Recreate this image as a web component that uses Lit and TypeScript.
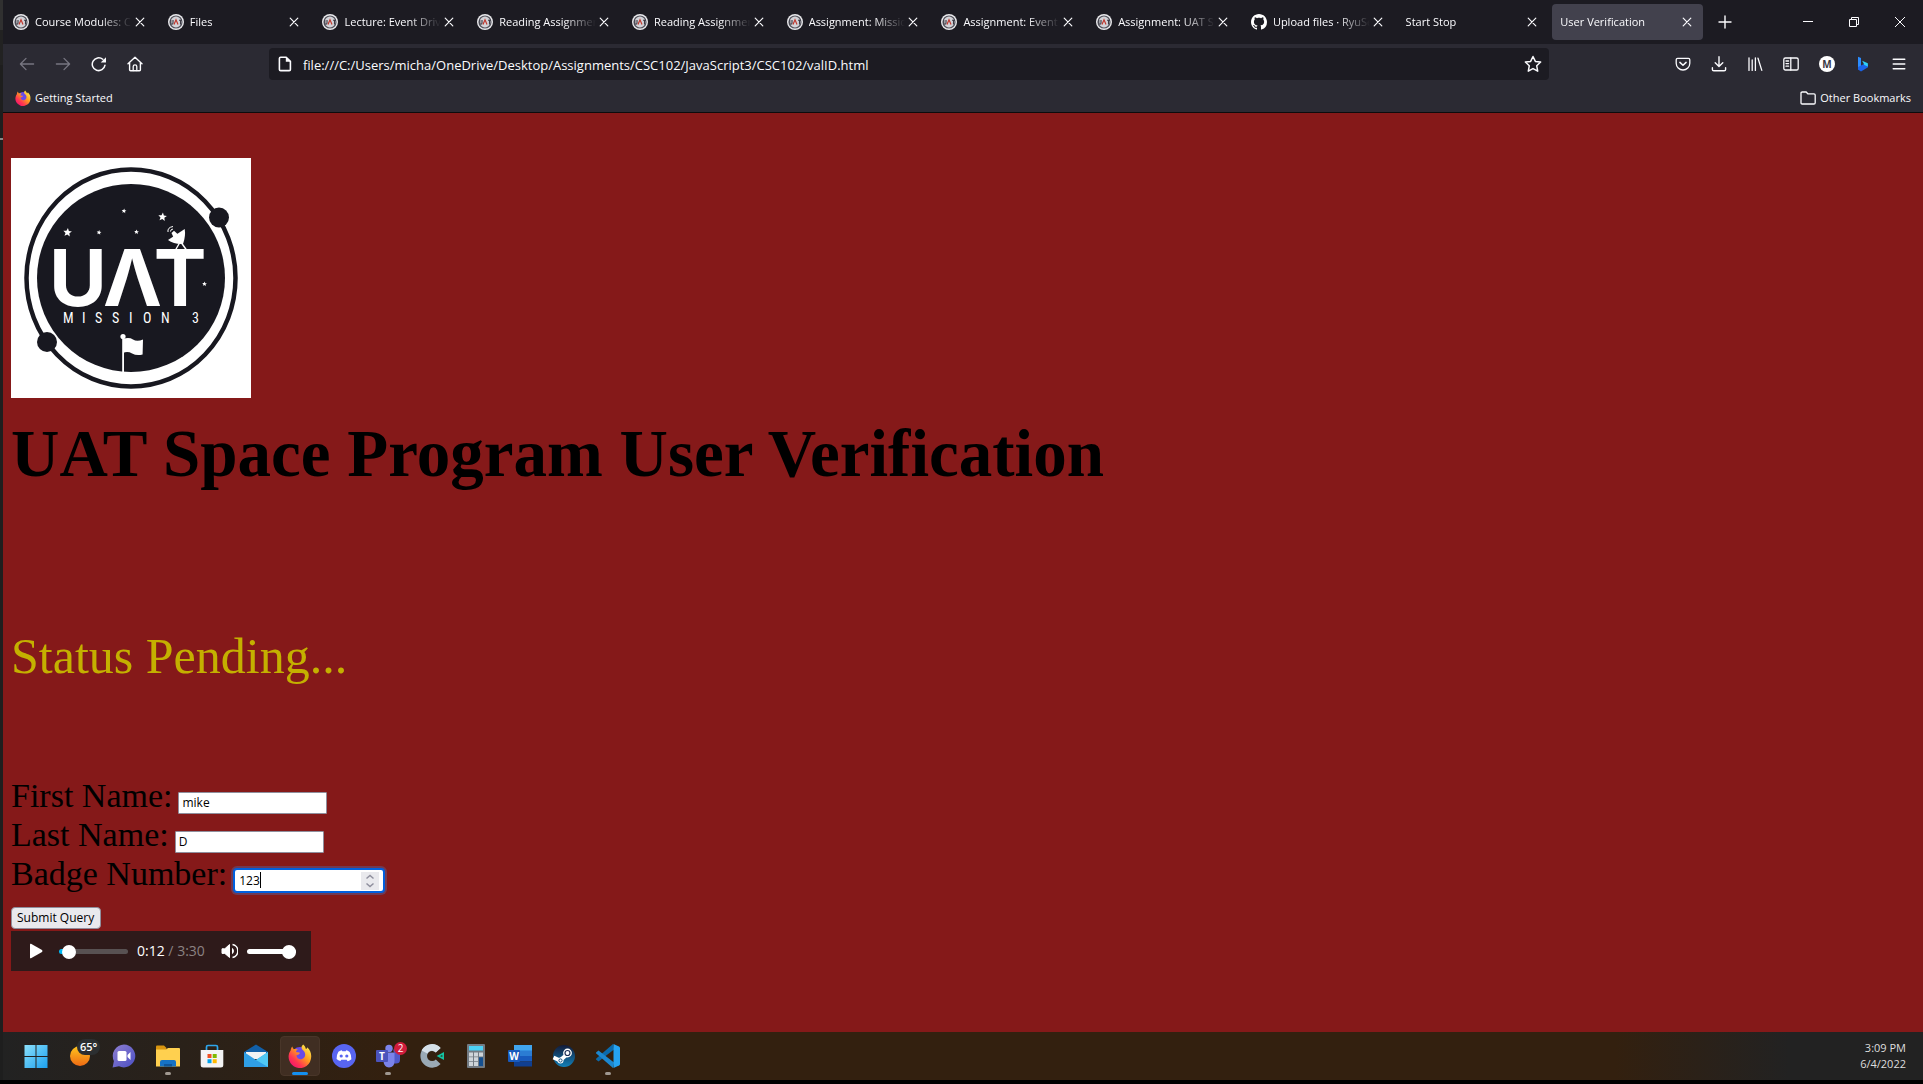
import { LitElement, html, svg, css, nothing } from "lit";
import { customElement, property, state } from "lit/decorators.js";
import { classMap } from "lit/directives/class-map.js";
import { styleMap } from "lit/directives/style-map.js";

/* ---------- shared drawings ---------- */

const line = (size: number, body: unknown) => html`
  <svg width=${size} height=${size} viewBox="0 0 16 16" fill="none" stroke="currentColor"
    stroke-width="1.3" stroke-linecap="round" stroke-linejoin="round" aria-hidden="true">${body}</svg>`;

const icons = {
  close: line(16, svg`<path d="M4.2 4.2l7.6 7.6M11.8 4.2l-7.6 7.6" stroke-width="1.2"/>`),
  plus: line(16, svg`<path d="M8 2v12M2 8h12" stroke-width="1.4"/>`),
  back: line(16, svg`<path d="M14.6 8H1.6M7 2.4L1.4 8 7 13.6"/>`),
  forward: line(16, svg`<path d="M1.4 8h13M9 2.4L14.6 8 9 13.6"/>`),
  reload: line(16, svg`<path d="M14 9.2A6.4 6.4 0 1 1 11.8 3.3" stroke-width="1.5"/><path d="M15 1.2v5.3H9.7z" fill="currentColor" stroke="none"/>`),
  home: line(16, svg`<path d="M1 7.8L8 1.2l7 6.6M2.6 6.6v7.2q0 .9.9.9h9q.9 0 .9-.9V6.6" stroke-width="1.4"/><path d="M6.2 14.5v-4q0-1.6 1.8-1.6t1.8 1.6v4"/>`),
  page: line(16, svg`<path d="M3.6 1.2h5.6l4.2 4.2v8q0 1.2-1.2 1.2H3.6q-1.2 0-1.2-1.2v-11q0-1.2 1.2-1.2z" stroke-width="1.6"/><path d="M8.8 1v4.8h4.8z" fill="currentColor" stroke="none"/>`),
  star: line(18, svg`<path d="M8 1.3l2.1 4.4 4.7.6-3.5 3.3.9 4.8L8 12.1l-4.2 2.3.9-4.8L1.2 6.3l4.7-.6z"/>`),
  pocket: line(16, svg`<path d="M2.6 2.4h10.8q1.4 0 1.4 1.4v3.4a6.8 6.8 0 0 1-13.6 0V3.8q0-1.4 1.4-1.4z"/><path d="M4.9 6.4L8 9.3l3.1-2.9" stroke-width="1.5"/>`),
  download: line(16, svg`<path d="M8 .8v9.6M4.2 6.8L8 10.6l3.8-3.8M1.4 11.8v1.6q0 1.4 1.4 1.4h10.4q1.4 0 1.4-1.4v-1.6" stroke-width="1.4"/>`),
  library: line(16, svg`<path d="M2 1.8v12.6M5.2 4v10.4M8.4 1.8v12.6M11 2.2l3.8 12.2"/>`),
  sidebar: line(16, svg`<rect x=".8" y="2" width="14.4" height="12" rx="1.6"/><path d="M7.8 2v12M3 5h2.6M3 7.6h2.6M3 10.2h2.6"/>`),
  menu: line(16, svg`<path d="M2.2 3.2h11.6M2.2 8h11.6M2.2 12.8h11.6" stroke-width="1.4"/>`),
  folder: line(16, svg`<path d="M2.2 2h4l1.6 1.8h6.2q1.2 0 1.2 1.2v7.8q0 1.2-1.2 1.2H2.2Q1 14 1 12.8V3.2Q1 2 2.2 2z"/>`),
  minimize: html`<svg width="12" height="12" viewBox="0 0 12 12" aria-hidden="true"><path d="M1 5.5h10" stroke="currentColor"/></svg>`,
  restore: html`<svg width="12" height="12" viewBox="0 0 12 12" fill="none" stroke="currentColor" aria-hidden="true"><path d="M1.5 3.5h7v7h-7zM3.5 3.5v-2h7v7h-2"/></svg>`,
  shut: html`<svg width="12" height="12" viewBox="0 0 12 12" fill="none" stroke="currentColor" aria-hidden="true"><path d="M1 1l10 10M11 1L1 11"/></svg>`,
  account: html`<svg width="16" height="16" viewBox="0 0 16 16" aria-hidden="true"><circle cx="8" cy="8" r="8" fill="#fff"/><text x="8" y="11.6" text-anchor="middle" font-family="Open Sans, sans-serif" font-size="10" font-weight="700" fill="#3a3944">M</text></svg>`,
  bing: html`<svg width="16" height="16" viewBox="0 0 16 16" aria-hidden="true"><path d="M3 .8l3 1.1v9.3l-3 2.6z" fill="#2a8cff"/><path d="M3 13.6V11l7-3.6 3 1.2v2.6L6 15.4z" fill="#1b63e8"/><path d="M7.2 4.8l5.6 2.4v3.4l-3.4-1.7z" fill="#2fd0f5"/></svg>`,
};

const firefox = (size: number) => html`
  <svg width=${size} height=${size} viewBox="0 0 24 24" aria-hidden="true">
    <defs>
      <linearGradient id="fx" x1=".85" y1=".1" x2=".15" y2=".9"><stop offset="0" stop-color="#ffe64a"/><stop offset=".4" stop-color="#ff9a1f"/><stop offset=".75" stop-color="#ff3750"/><stop offset="1" stop-color="#f5156c"/></linearGradient>
    </defs>
    <circle cx="12" cy="11.5" r="8.5" fill="#6a4be8"/>
    <path d="M15.2.6c1.500 1.300 2.300 2.800 2.700 4.300 1-.2 1.300-1 1.300-1.700 3.100 2.900 4.200 6.300 4 9.600A11.300 11.300 0 1 1 2.700 6.200c.1-1.400.7-2.800 1.600-3.800.2 1.200.8 2.100 1.600 2.800 1.400-.4 2.800-.3 4 .3-1.300.7-1.900 1.500-1.900 2.300 1.200.9 2.600.4 3.900 1-.4 1.500-1.800 2.200-3.500 2.400.2 3 2.700 4.600 5.100 4 3-.7 4.300-3.300 3.400-6.200-.5-1.600-1.600-2.500-2.600-3.400-1.300-1.500-.9-3.700.9-5z" fill="url(#fx)"/>
  </svg>`;

const uatBadge = html`
  <svg width="16" height="16" viewBox="0 0 16 16" aria-hidden="true">
    <circle cx="8" cy="8" r="8" fill="#e9e9ec"/><circle cx="8" cy="8" r="6" fill="#d3d3d8" stroke="#55555e" stroke-width="1.200"/>
    <path d="M2.800 6v3q0 1.200 1.100 1.200T5 9V6M11 6.200h3M12.500 6.200v4.200" fill="none" stroke="#3a3a44" stroke-width="1.100"/>
    <path d="M6 10.400L8 5.800l2 4.600" fill="none" stroke="#c0392f" stroke-width="1.200"/>
  </svg>`;

const github = html`
  <svg width="16" height="16" viewBox="0 0 16 16" fill="#fff" aria-hidden="true">
    <path d="M8 0C3.580 0 0 3.580 0 8c0 3.540 2.290 6.530 5.470 7.590.4.070.55-.17.55-.38 0-.19-.01-.82-.01-1.490-2.010.37-2.530-.49-2.690-.94-.09-.23-.48-.94-.82-1.130-.28-.15-.68-.52-.01-.53.63-.01 1.080.58 1.230.82.72 1.210 1.870.87 2.330.66.07-.52.28-.87.51-1.070-1.780-.2-3.640-.89-3.640-3.950 0-.87.31-1.590.82-2.150-.08-.2-.36-1.020.08-2.120 0 0 .67-.21 2.200.82.64-.18 1.320-.27 2-.27s1.360.09 2 .27c1.530-1.040 2.200-.82 2.200-.82.44 1.100.16 1.920.08 2.120.51.56.82 1.270.82 2.150 0 3.070-1.870 3.750-3.650 3.950.29.25.54.73.54 1.480 0 1.070-.01 1.930-.01 2.200 0 .21.15.46.55.38A8.010 8.010 0 0 0 16 8c0-4.420-3.580-8-8-8z"/>
  </svg>`;

/* ---------- browser chrome ---------- */

interface Tab { title: string; icon?: "uat" | "github"; active?: boolean }

const TABS: Tab[] = [
  { title: "Course Modules: CSC102", icon: "uat" },
  { title: "Files", icon: "uat" },
  { title: "Lecture: Event Driven", icon: "uat" },
  { title: "Reading Assignment", icon: "uat" },
  { title: "Reading Assignment", icon: "uat" },
  { title: "Assignment: Mission", icon: "uat" },
  { title: "Assignment: Event Dr", icon: "uat" },
  { title: "Assignment: UAT Space", icon: "uat" },
  { title: "Upload files · RyuSei", icon: "github" },
  { title: "Start Stop" },
  { title: "User Verification", active: true },
];

@customElement("browser-chrome")
export class BrowserChrome extends LitElement {
  @state() private url = "file:///C:/Users/micha/OneDrive/Desktop/Assignments/CSC102/JavaScript3/CSC102/valID.html";

  static styles = css`
    :host { display: block; background: #2b2a33; color: #fbfbfe; border-bottom: 1px solid #0c0c0d;
      font: 11px/16px "Open Sans", "Noto Sans", sans-serif; }
    button { all: unset; display: flex; align-items: center; justify-content: center; box-sizing: border-box; }
    svg { display: block; flex: none; }
    .strip { display: flex; align-items: center; height: 44px; background: #1c1b22; }
    .tabs { display: flex; flex: 1; min-width: 0; }
    .cell { flex: 1 1 0; min-width: 0; padding: 0 2px; }
    .tab { display: flex; align-items: center; gap: 6px; height: 36px; padding: 0 8px; border-radius: 4px; }
    .tab.active { background: #42414d; }
    .title { flex: 1; min-width: 0; overflow: hidden; white-space: nowrap;
      mask-image: linear-gradient(to right, #000 calc(100% - 32px), transparent); }
    .tab .close { margin-left: -6px; }
    .new { width: 40px; height: 36px; }
    .drag { width: 40px; }
    .win { width: 46px; height: 44px; }
    .nav { display: flex; align-items: center; height: 40px; padding: 0 6px; }
    .tool { width: 36px; height: 32px; }
    .tool.off { color: #777681; }
    .space { flex: 11 1 0; }
    .url { flex: 120 1 0; display: flex; align-items: center; gap: 10px; height: 32px; padding: 0 7px 0 8px;
      box-sizing: border-box; border-radius: 4px; background: #1c1b22; }
    .url input { flex: 1; min-width: 0; padding: 2px 0 0; border: 0; outline: 0; background: none; color: inherit;
      font: 13px/20px "Open Sans", "Noto Sans", sans-serif; }
    .marks { display: flex; justify-content: space-between; align-items: center; height: 28px; padding: 0 12px;
      box-sizing: border-box; }
    .marks a { display: flex; align-items: center; gap: 4px; color: inherit; text-decoration: none; }
  `;

  private tool(label: string, icon: unknown, off = false) {
    return html`<button class=${classMap({ tool: true, off })} aria-label=${label}>${icon}</button>`;
  }

  render() {
    return html`
      <div class="strip">
        <div class="tabs">
          ${TABS.map((t) => html`
            <div class="cell">
              <div class=${classMap({ tab: true, active: !!t.active })}>
                ${t.icon === "uat" ? uatBadge : t.icon === "github" ? github : nothing}
                <span class="title">${t.title}</span>
                <button class="close" aria-label="Close tab">${icons.close}</button>
              </div>
            </div>`)}
        </div>
        <button class="new" aria-label="New tab">${icons.plus}</button>
        <div class="drag"></div>
        <button class="win" aria-label="Minimize">${icons.minimize}</button>
        <button class="win" aria-label="Restore">${icons.restore}</button>
        <button class="win" aria-label="Close">${icons.shut}</button>
      </div>
      <div class="nav">
        ${this.tool("Back", icons.back, true)}
        ${this.tool("Forward", icons.forward, true)}
        ${this.tool("Reload", icons.reload)}
        ${this.tool("Home", icons.home)}
        <div class="space"></div>
        <div class="url">
          ${icons.page}
          <input aria-label="Address" .value=${this.url} spellcheck="false">
          <button aria-label="Bookmark this page">${icons.star}</button>
        </div>
        <div class="space"></div>
        ${this.tool("Pocket", icons.pocket)}
        ${this.tool("Downloads", icons.download)}
        ${this.tool("Library", icons.library)}
        ${this.tool("Sidebars", icons.sidebar)}
        ${this.tool("Account", icons.account)}
        ${this.tool("Bing", icons.bing)}
        ${this.tool("Menu", icons.menu)}
      </div>
      <div class="marks">
        <a href="#">${firefox(16)}<span>Getting Started</span></a>
        <a href="#">${icons.folder}<span>Other Bookmarks</span></a>
      </div>`;
  }
}

/* ---------- mission patch ---------- */

const starAt = (x: number, y: number, r: number) => {
  const pts = Array.from({ length: 10 }, (_, i) => {
    const a = (Math.PI / 5) * i - Math.PI / 2 + 0.1;
    const k = i % 2 ? r * 0.45 : r;
    return `${(x + k * Math.cos(a)).toFixed(2)},${(y + k * Math.sin(a)).toFixed(2)}`;
  }).join(" ");
  return svg`<polygon points=${pts}/>`;
};

@customElement("mission-patch")
export class MissionPatch extends LitElement {
  static styles = css`
    :host { display: block; width: 240px; height: 240px; background: #fff; }
    svg { display: block; }
    .big { font: 700 79px Inter, sans-serif; }
    .small { font: 400 14px "Liberation Sans Narrow", "Roboto Condensed", "Roboto", sans-serif; }
  `;
  render() {
    return html`
      <svg width="240" height="240" viewBox="0 0 240 240" role="img" aria-label="UAT Mission 3">
        <ellipse cx="120" cy="120" rx="104.500" ry="108.500" fill="none" stroke="#181820" stroke-width="4.500"/>
        <ellipse cx="120" cy="120" rx="94" ry="94" fill="#181820"/>
        <circle cx="208" cy="59.500" r="10" fill="#181820"/>
        <circle cx="36" cy="184" r="10" fill="#181820"/>
        <g fill="#fff">
          ${starAt(56.5, 74.5, 4.5)}${starAt(88, 74.5, 2.5)}${starAt(113, 53, 2.5)}${starAt(125.5, 74, 2.5)}
          ${starAt(151.5, 59, 4.5)}${starAt(193.5, 126, 2.5)}
          <path d="M173.700 71q1.200 7-1.700 15-9 .500-15-4z"/>
          <path d="M160.500 75l2.500-2.200 3 2.800 1 4-4 1z"/>
          <path d="M168.500 85l-4 7M170.500 85l5 7" stroke="#fff" stroke-width="1.400"/>
          <path d="M157 74q-.8-4.500 5-5.500M159.500 73.500q-.2-2 2.500-2.500" fill="none" stroke="#fff"/>
          <circle cx="112" cy="178.500" r="2.600"/>
          <path d="M111.200 178h1.800v36h-1.800z"/>
          <path d="M112 181q6-2 10 .5t10 0l-.4 15q-6 1.500-10.500-1t-9.100-.5z"/>
          <text class="big" x="67" y="148" text-anchor="middle">U</text>
          <text class="big" x="121.500" y="148" text-anchor="middle">Λ</text>
          <text class="big" x="169" y="148" text-anchor="middle">T</text>
          <text class="small" y="165" x="52 71 84 101 118 132 150 170 181">MISSION 3</text>
        </g>
      </svg>`;
  }
}

/* ---------- media player ---------- */

@customElement("audio-player")
export class AudioPlayer extends LitElement {
  @property({ type: Number }) position = 12;
  @property({ type: Number }) duration = 210;
  @property({ type: Number }) volume = 100;

  static styles = css`
    :host { display: flex; align-items: center; width: 300px; height: 40px; padding: 0 15px 0 16px;
      box-sizing: border-box; background: #2e1a1a; color: #fff; font: 14px/20px "Open Sans", "Noto Sans", sans-serif; }
    button { all: unset; display: flex; }
    svg { display: block; }
    input { appearance: none; height: 14px; margin: 0; background: none; }
    input::-webkit-slider-runnable-track { height: 5px; border-radius: 3px;
      background: linear-gradient(to right, var(--on) var(--fill), #585152 var(--fill)); }
    input::-webkit-slider-thumb { appearance: none; width: 14px; height: 14px; margin-top: -4px;
      border-radius: 50%; background: #fff; }
    .seek { width: 69px; --on: #00b6f0; margin: 0 9px 0 15px; }
    .vol { width: 49px; --on: #fff; margin-left: 9px; }
    .time { flex: 1; color: #8b8282; white-space: nowrap; }
    .now { color: #fff; }
  `;

  private clock(s: number) {
    return `${Math.floor(s / 60)}:${String(s % 60).padStart(2, "0")}`;
  }

  render() {
    return html`
      <button aria-label="Play"><svg width="17" height="18" viewBox="0 0 17 18"><path d="M3 2.500q0-1.200 1-.7l11 6.300q1 .9 0 1.800l-11 6.300q-1 .5-1-.7z" fill="#fff"/></svg></button>
      <input class="seek" type="range" aria-label="Seek" max=${this.duration} .value=${String(this.position)}
        style=${styleMap({ "--fill": `${(this.position / this.duration) * 100}%` })}>
      <span class="time"><span class="now">${this.clock(this.position)}</span> / ${this.clock(this.duration)}</span>
      <button aria-label="Mute"><svg width="17" height="16" viewBox="0 0 17 16" fill="none" stroke="#fff" stroke-width="1.500"><path d="M1 5.800h2.800L8.500 1.500v13L3.800 10.400H1z" fill="#fff" stroke="#fff" stroke-linejoin="round" stroke-width="1"/><path d="M11 4.800v6.400q2-1.200 2-3.200t-2-3.200z" fill="#fff" stroke="none"/><path d="M11.500 1.600a6.500 6.500 0 0 1 0 12.800"/></svg></button>
      <input class="vol" type="range" aria-label="Volume" max="100" .value=${String(this.volume)}
        style=${styleMap({ "--fill": `${this.volume}%` })}>`;
  }
}

/* ---------- the verification page ---------- */

@customElement("verification-page")
export class VerificationPage extends LitElement {
  static styles = css`
    :host { display: block; padding: 45px 8px 48px; background: #851919; color: #000;
      font: 34px/39px "Liberation Serif", "Times New Roman", serif; }
    h1 { margin: 17px 0 0; font-size: 67px; line-height: 77px; font-weight: 700; }
    .status { margin: 135px 0 91px; font-size: 50px; line-height: 58px; color: #c4b000; }
    .row { display: flex; align-items: baseline; gap: 6px; height: 39px; }
    input, .submit { font: 12px/18px "Open Sans", "Noto Sans", sans-serif; color: #000; box-sizing: border-box; }
    input { width: 149px; height: 22px; padding: 0 3px; border: 1px solid #8f8f9d; border-radius: 1px;
      background: #fff; outline: 0; }
    .number { position: relative; display: flex; }
    .number input { appearance: textfield; border: 2px solid #0060df; border-radius: 4px; width: 152px; height: 25px;
      padding: 0 4px; box-shadow: 0 0 0 2px #6f3a55; }
    .number input::-webkit-inner-spin-button { appearance: none; margin: 0; }
    .spin { position: absolute; right: 6px; top: 4px; width: 18px; height: 18px; background: #e9e9ed; }
    .caret { position: absolute; left: 27px; top: 4px; width: 1px; height: 16px; background: #000; }
    .submit { display: block; height: 22px; margin: 14px 0 2px; padding: 0 6px 0 5px; border: 1px solid #8f8f9d;
      border-radius: 4px; background: #e9e9ed; }
  `;
  render() {
    return html`
      <mission-patch></mission-patch>
      <h1>UAT Space Program User Verification</h1>
      <p class="status">Status Pending...</p>
      <form @submit=${(e: Event) => e.preventDefault()}>
        <div class="row"><label for="first">First Name:</label><input id="first" type="text" value="mike"></div>
        <div class="row"><label for="last">Last Name:</label><input id="last" type="text" value="D"></div>
        <div class="row"><label for="badge">Badge Number:</label>
          <span class="number"><input id="badge" type="number" value="123"><span class="caret"></span>
            <svg class="spin" viewBox="0 0 18 18" fill="none" stroke="#8f8f9d" stroke-width="1.500" aria-hidden="true"><path d="M5.500 6.500L9 3.500l3.500 3M5.500 11.500l3.500 3 3.500-3"/></svg></span>
        </div>
        <button class="submit" type="submit">Submit Query</button>
      </form>
      <audio-player></audio-player>`;
  }
}

/* ---------- taskbar ---------- */

const app = (body: unknown) => html`<svg width="24" height="24" viewBox="0 0 24 24" aria-hidden="true">${body}</svg>`;

interface App { name: string; art: unknown; open?: boolean; active?: boolean; temp?: string; count?: number }

const APPS: App[] = [
  { name: "Start", art: app(svg`<linearGradient id="w" x2="1" y2="1" x1="0" y1="0" gradientUnits="objectBoundingBox"><stop offset="0" stop-color="#8be0fb"/><stop offset="1" stop-color="#1ba0ee"/></linearGradient><path d="M.5 1h11v11H.5zM12.500 1h11v11h-11zM.5 13h11v11H.5zM12.500 13h11v11h-11z" fill="url(#w)"/>`) },
  { name: "Weather", temp: "65°", art: app(svg`<linearGradient id="s" x2="0" y2="1"><stop offset="0" stop-color="#ffc61e"/><stop offset="1" stop-color="#ee6a14"/></linearGradient><circle cx="12" cy="12" r="10" fill="url(#s)"/>`) },
  { name: "Chat", art: app(svg`<linearGradient id="c" x2="1" y2="1"><stop offset="0" stop-color="#8f7fd0"/><stop offset="1" stop-color="#4b4fc4"/></linearGradient><path d="M12 .6A11.400 11.400 0 1 1 7 22.300L.6 23.400 1.900 17A11.400 11.400 0 0 1 12 .6z" fill="url(#c)"/><rect x="5.500" y="7" width="9" height="10" rx="1.500" fill="#fff"/><path d="M15.500 11l3-3v8l-3-3z" fill="#fff"/>`) },
  { name: "File Explorer", open: true, art: app(svg`<path d="M0 2.500q0-1 1-1h7l2.500 2.500v4H0z" fill="#d9950f"/><path d="M0 5.500h10L12 4h11q1 0 1 1v17.500H0z" fill="#ffd04f"/><path d="M4 22.500V18q0-2 2-2h12q2 0 2 2v4.500z" fill="#1672c4"/><path d="M8 22.500V20h8v2.500z" fill="#0f5599"/>`) },
  { name: "Store", art: app(svg`<path d="M6.500 6V3q0-1.500 1.500-1.500h8q1.500 0 1.500 1.500v3" fill="none" stroke="#2ea6ec" stroke-width="1.700"/><path d="M.7 6h22.600v15q0 2.500-2.500 2.500H3.200Q.7 23.500.7 21z" fill="#f4f4f4"/><path d="M7.500 10h4v4h-4z" fill="#f05022"/><path d="M12.700 10h4v4h-4z" fill="#7fba00"/><path d="M7.500 15.200h4v4h-4z" fill="#00a4ef"/><path d="M12.700 15.200h4v4h-4z" fill="#ffb900"/>`) },
  { name: "Mail", art: app(svg`<path d="M0 8l12-7.500L24 8v3H0z" fill="#1260a8"/><path d="M2 8h20v7H2z" fill="#f0f2f4"/><path d="M0 8l12 8 12-8v15H0z" fill="#2f9fe6"/><path d="M24 8v15L12 16z" fill="#4fc8f4"/>`) },
  { name: "Firefox", active: true, art: firefox(24) },
  { name: "Discord", art: app(svg`<circle cx="12" cy="12" r="12" fill="#5865f2"/><path d="M8.200 6.800L9.800 6.200l.5 1h3.400l.5-1 1.600.6 1.800 1.200q2 3.200 1.800 7.200-1.700 1.500-3.800 2l-.9-1.500h-5.400L8.400 17q-2.200-.5-3.800-2-.2-4 1.800-7.200z" fill="#fff"/><circle cx="9.200" cy="12" r="1.600" fill="#5865f2"/><circle cx="14.800" cy="12" r="1.600" fill="#5865f2"/>`) },
  { name: "Teams", open: true, count: 2, art: app(svg`<circle cx="13" cy="4.500" r="3.700" fill="#7b83eb"/><circle cx="20" cy="6.500" r="2.600" fill="#5059c9"/><path d="M16 9h8v7q0 3.500-4 3.500h-4z" fill="#5059c9"/><path d="M8 8.500h10.500V17q0 6-5.500 6.500-5-.5-5.500-6z" fill="#7b83eb"/><rect x="0" y="6" width="12" height="12" rx="1" fill="#4b53bc"/><text x="6" y="15.500" text-anchor="middle" font-family="Open Sans, sans-serif" font-weight="700" font-size="10" fill="#fff">T</text>`) },
  { name: "Connect", art: app(svg`<path d="M18.200 6.200A8.400 8.400 0 1 0 18.200 17.800" fill="none" stroke="#9aa9b5" stroke-width="6.600"/><path d="M4.500 8A8.400 8.400 0 0 1 18.200 6.200" fill="none" stroke="#d6e0e8" stroke-width="6.600"/><path d="M18.500 12l4.700-2.600v5.200z" fill="none" stroke="#13c3a2" stroke-width="1.800"/>`) },
  { name: "Calculator", art: app(svg`<rect x="3" width="18" height="24" rx="1" fill="#737b83"/><path d="M5 2h14v4.500H5z" fill="#4cd1f5"/><path d="M5 8.500h4v4H5zM10 8.500h4v4h-4zM15 8.500h4v4h-4zM5 13.300h4v4H5zM10 13.300h4v4h-4zM5 18.100h4v4H5zM10 18.100h4v4h-4z" fill="#cfd5da"/><path d="M15 13.300h4v8.800h-4z" fill="#154f8f"/>`) },
  { name: "Word", art: app(svg`<path d="M6 1h18v6H6z" fill="#41a5ee"/><path d="M6 6.500h18V12H6z" fill="#2b7cd3"/><path d="M6 12h18v5.500H6z" fill="#185abd"/><path d="M6 17.500h18v5H6z" fill="#103f91"/><rect y="6" width="12" height="12" rx="1" fill="#185abd"/><text x="6" y="15.500" text-anchor="middle" font-family="Open Sans, sans-serif" font-weight="700" font-size="10" fill="#fff">W</text>`) },
  { name: "Steam", art: app(svg`<linearGradient id="st" x2="0" y2="1"><stop offset="0" stop-color="#131a38"/><stop offset="1" stop-color="#1280b8"/></linearGradient><circle cx="12" cy="12" r="11" fill="url(#st)"/><path d="M1.500 13.500l6.500 3 8-7" fill="none" stroke="#fff" stroke-width="4"/><circle cx="15.500" cy="9" r="4.400" fill="#fff"/><circle cx="15.500" cy="9" r="2.500" fill="none" stroke="#1d2f55" stroke-width="1.200"/><circle cx="8.500" cy="16.500" r="3" fill="#fff"/><circle cx="8.500" cy="16.500" r="1.600" fill="none" stroke="#17507f"/>`) },
  { name: "Code", open: true, art: app(svg`<path d="M18 5.500L2.500 17.500.3 15.800q-.6-.6 0-1.200L17 0z" fill="#0a6fb4" opacity=".95"/><path d="M18 18.500L2.500 6.500.3 8.200q-.6.6 0 1.200L17 24z" fill="#1c87cf"/><path d="M17.500 0L23 2.500q1 .5 1 1.500v16q0 1-1 1.500L17.500 24z" fill="#25a3f2"/>`) },
];

@customElement("task-bar")
export class TaskBar extends LitElement {
  static styles = css`
    :host { display: flex; align-items: center; justify-content: space-between; height: 48px; padding: 0 17px 0 13px;
      box-sizing: border-box; background: linear-gradient(to right, #222 0, #33200f 20%, #33200f 84%, #222 93%);
      color: #dedede; font: 11px/16px "Open Sans", "Noto Sans", sans-serif; }
    .apps { display: flex; gap: 4px; }
    button { all: unset; position: relative; display: flex; align-items: center; justify-content: center;
      width: 40px; height: 40px; border-radius: 4px; box-sizing: border-box; }
    .active { background: #402e22; border: 1px solid #493629; }
    svg { display: block; }
    .mark { position: absolute; bottom: 1px; left: 50%; width: 6px; height: 3px; margin-left: -3px;
      border-radius: 2px; background: #a09890; }
    .active .mark { bottom: 0; width: 16px; margin-left: -8px; background: #1490f0; }
    .temp { position: absolute; left: 17px; top: 3px; padding: 0 3px; border-radius: 8px; background: #2c2f31; color: #fff;
      line-height: 16px; font-weight: 600; }
    .count { position: absolute; right: 1px; top: 6px; width: 13px; height: 13px; border-radius: 50%; background: #d01c3c;
      color: #fff; font-size: 10px; line-height: 13px; text-align: center; }
    .clock { text-align: right; }
  `;
  render() {
    return html`
      <div class="apps">
        ${APPS.map((a) => html`
          <button class=${classMap({ active: !!a.active })} aria-label=${a.name}>
            ${a.art}
            ${a.temp ? html`<span class="temp">${a.temp}</span>` : nothing}
            ${a.count ? html`<span class="count">${a.count}</span>` : nothing}
            ${a.open || a.active ? html`<span class="mark"></span>` : nothing}
          </button>`)}
      </div>
      <div class="clock"><div>3:09 PM</div><div>6/4/2022</div></div>`;
  }
}

/* ---------- desktop ---------- */

@customElement("app-root")
export class AppRoot extends LitElement {
  static styles = css`
    :host { display: flex; min-height: 100vh; background: #000; }
    .edge { width: 3px; background: linear-gradient(to bottom, #303030 30px, #222 30px, #222 65px, #1e1e1e 65px,
      #1e1e1e 138px, #8a8a8a 138px, #8a8a8a 140px, #1e1e1e 140px); margin-bottom: 4px; }
    .window { flex: 1; min-width: 0; display: flex; flex-direction: column; padding-bottom: 4px; }
    verification-page { flex: 1; }
  `;
  render() {
    return html`
      <div class="edge"></div>
      <div class="window">
        <browser-chrome></browser-chrome>
        <verification-page></verification-page>
        <task-bar></task-bar>
      </div>`;
  }
}
